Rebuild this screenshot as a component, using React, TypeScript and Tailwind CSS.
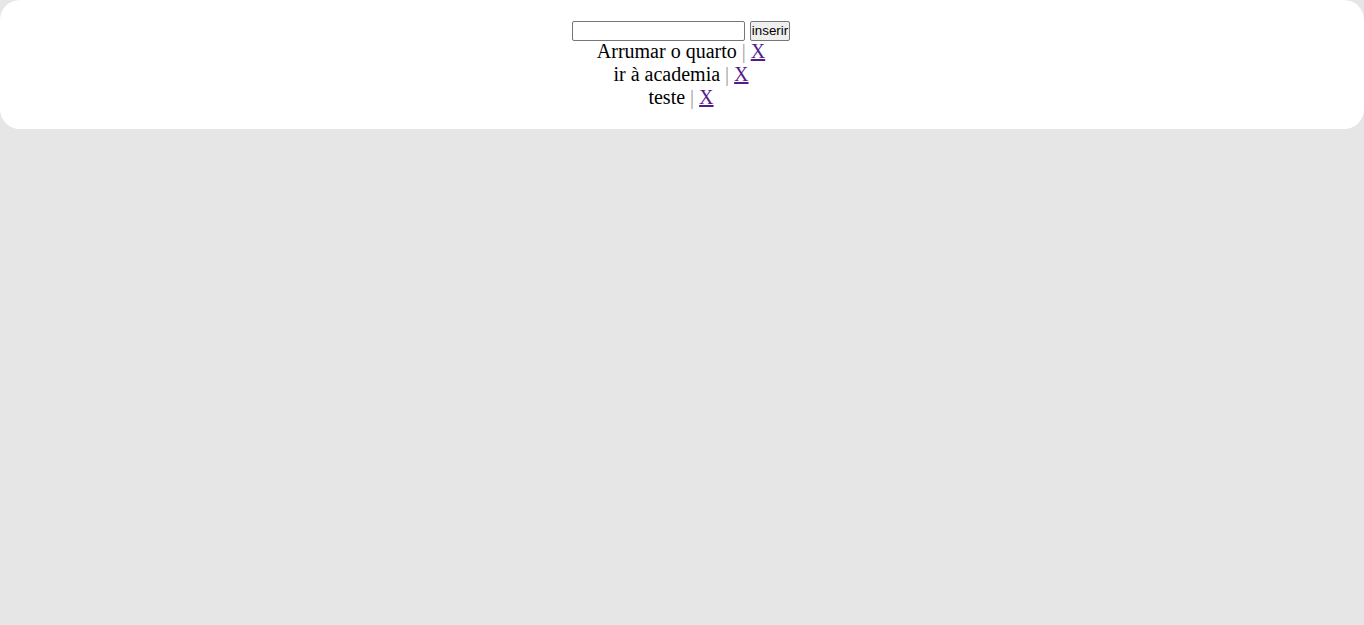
import { useState } from 'react'

export default function App() {
  const [text, setText] = useState('')
  const [items, setItems] = useState(['Arrumar o quarto', 'ir à academia', 'teste'])

  const add = () => {
    if (!text.trim()) return
    setItems([...items, text])
    setText('')
  }

  return (
    <div className="min-h-screen w-full bg-[#e6e6e6] font-['Liberation_Serif',serif] text-[20px] leading-[23px] text-black">
      <div className="rounded-[20px] bg-white pt-[17px] pr-[2px] pb-[20px] text-center">
        <div>
          <input
            value={text}
            onChange={(e) => setText(e.target.value)}
            className="h-[20px] w-[173px] rounded-[2px] border border-[#767676] bg-white px-[2px] align-baseline font-['Liberation_Sans',sans-serif] text-[13.33px] leading-[16px]"
          />{' '}
          <button
            type="button"
            onClick={add}
            className="h-[20px] rounded-[2px] border border-[#767676] bg-[#efefef] px-[1px] align-baseline font-['Liberation_Sans',sans-serif] text-[13.33px] leading-[16px]"
          >
            inserir
          </button>
        </div>
        <div className="-mt-px">
          {items.map((item, i) => (
            <div key={i}>
              {item} <span className="text-[#9a9a9a]">|</span>{' '}
              <a
                href="#"
                className="text-[#551a8b] underline"
                onClick={(e) => {
                  e.preventDefault()
                  setItems(items.filter((_, j) => j !== i))
                }}
              >
                X
              </a>
            </div>
          ))}
        </div>
      </div>
    </div>
  )
}
